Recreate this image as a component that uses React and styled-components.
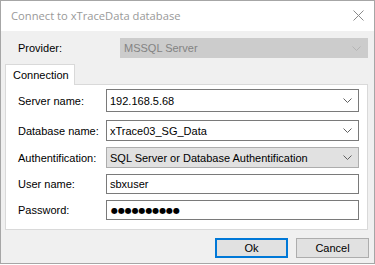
import React from 'react';
import styled, { createGlobalStyle } from 'styled-components';

const GlobalStyle = createGlobalStyle`
  body {
    margin: 0;
    background: #ffffff;
    font-family: 'Liberation Sans', Arial, sans-serif;
  }
`;

const Window = styled.div`
  box-sizing: border-box;
  width: 375px;
  height: 264px;
  border: 1px solid #a6a6a6;
  display: flex;
  flex-direction: column;
  background: #ffffff;
`;

const TitleBar = styled.div`
  height: 30px;
  display: flex;
  align-items: center;
  justify-content: space-between;
  padding: 0 10px 0 10px;
  flex-shrink: 0;
`;

const Title = styled.span`
  font-family: 'Open Sans', 'Noto Sans', sans-serif;
  font-size: 11.2px;
  color: #999999;
  margin-top: -1px;
`;

const CloseIcon = styled.svg`
  width: 11px;
  height: 11px;
  margin-top: -1px;
`;

const Body = styled.div`
  flex: 1;
  background: #f0f0f0;
  padding: 7px 6px 0 4px;
  font-size: 11px;
  color: #000000;
`;

const ProviderRow = styled.div`
  display: flex;
  align-items: center;
  height: 20px;
`;

const Label = styled.span`
  width: ${p => p.$width}px;
  padding-left: ${p => p.$indent}px;
  flex-shrink: 0;
`;

const Combo = styled.div`
  box-sizing: border-box;
  width: 253px;
  height: ${p => p.$h}px;
  display: flex;
  align-items: center;
  justify-content: space-between;
  padding: 0 6px 0 3px;
  border: 1px solid ${p => (p.$variant === 'disabled' ? '#cccccc' : p.$variant === 'list' ? '#adadad' : '#7a7a7a')};
  background: ${p => (p.$variant === 'disabled' ? '#cccccc' : p.$variant === 'list' ? '#e1e1e1' : '#ffffff')};
  color: ${p => (p.$variant === 'disabled' ? '#838383' : '#000000')};
`;

const TextBox = styled.div`
  box-sizing: border-box;
  width: 253px;
  height: 20px;
  display: flex;
  align-items: center;
  padding: 0 3px;
  border: 1px solid #7a7a7a;
  background: #ffffff;
`;

const Dots = styled.span`
  font-family: 'DejaVu Sans', sans-serif;
  font-size: 8px;
  letter-spacing: -0.1px;
  padding-left: 1px;
`;

const Tabs = styled.div`
  display: flex;
  margin-top: 6px;
  position: relative;
  z-index: 1;
`;

const Tab = styled.div`
  box-sizing: border-box;
  width: 70px;
  height: 21px;
  margin-bottom: -1px;
  padding-left: 7px;
  display: flex;
  align-items: center;
  background: #ffffff;
  border: 1px solid #d9d9d9;
  border-bottom: none;
`;

const Panel = styled.div`
  box-sizing: border-box;
  height: 146px;
  border: 1px solid #d9d9d9;
  background: #ffffff;
  padding: 4px 0 0 12px;
  display: flex;
  flex-direction: column;
  gap: 6px;
`;

const Row = styled.div`
  display: flex;
  align-items: center;
  margin-bottom: ${p => p.$extra || 0}px;
`;

const Buttons = styled.div`
  display: flex;
  justify-content: flex-end;
  gap: 8px;
  margin: 8px -1px 0 0;
`;

const Button = styled.button`
  box-sizing: border-box;
  width: 73px;
  height: 20px;
  padding: 0;
  font-family: 'Liberation Sans', Arial, sans-serif;
  font-size: 11px;
  color: #000000;
  background: #e1e1e1;
  border: ${p => (p.$primary ? '2px solid #0078d7' : '1px solid #adadad')};
`;

const Chevron = ({ color = '#606060' }) => (
  <svg width="9" height="5" viewBox="0 0 9 5">
    <polyline points="0.5,0.5 4.5,4.5 8.5,0.5" fill="none" stroke={color} strokeWidth="1" />
  </svg>
);

const App = () => (
  <>
    <GlobalStyle />
    <Window>
      <TitleBar>
        <Title>Connect to xTraceData database</Title>
        <CloseIcon viewBox="0 0 11 11">
          <path d="M0.5 0.5 L10.5 10.5 M10.5 0.5 L0.5 10.5" stroke="#8a8a8a" strokeWidth="1" />
        </CloseIcon>
      </TitleBar>
      <Body>
        <ProviderRow>
          <Label $width={102} $indent={13}>Provider:</Label>
          <Combo $h={20} $variant="disabled">
            <span>MSSQL Server</span>
            <Chevron color="#b4b4b4" />
          </Combo>
        </ProviderRow>
        <Tabs>
          <Tab>Connection</Tab>
        </Tabs>
        <Panel>
          <Row $extra={2}>
            <Label $width={88} $indent={0}>Server name:</Label>
            <Combo $h={23}>
              <span>192.168.5.68</span>
              <Chevron />
            </Combo>
          </Row>
          <Row>
            <Label $width={88} $indent={0}>Database name:</Label>
            <Combo $h={21}>
              <span>xTrace03_SG_Data</span>
              <Chevron />
            </Combo>
          </Row>
          <Row>
            <Label $width={88} $indent={0}>Authentification:</Label>
            <Combo $h={21} $variant="list">
              <span>SQL Server or Database Authentification</span>
              <Chevron />
            </Combo>
          </Row>
          <Row>
            <Label $width={88} $indent={0}>User name:</Label>
            <TextBox>sbxuser</TextBox>
          </Row>
          <Row>
            <Label $width={88} $indent={0}>Password:</Label>
            <TextBox>
              <Dots>●●●●●●●●●●</Dots>
            </TextBox>
          </Row>
        </Panel>
        <Buttons>
          <Button $primary>Ok</Button>
          <Button>Cancel</Button>
        </Buttons>
      </Body>
    </Window>
  </>
);

export default App;
